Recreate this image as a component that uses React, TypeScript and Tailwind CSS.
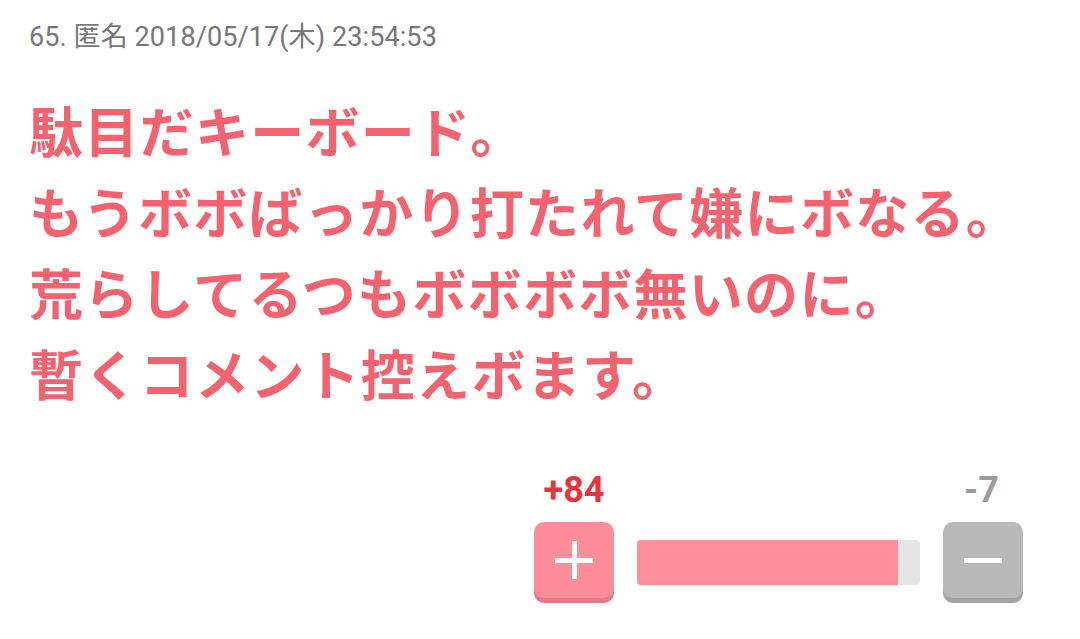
import React from "react";

export default function App() {
  const plus = 84;
  const minus = 7;
  const ratio = plus / (plus + minus);
  return (
    <div className="w-[1080px] h-[639px] bg-white overflow-hidden" style={{ fontFamily: 'Roboto, "Noto Sans CJK JP", sans-serif' }}>
      <div className="pl-[29px] pt-[19px]">
        <div className="text-[27px] leading-[36px] text-[#777777] tracking-[0.1px]" style={{ fontFamily: 'Roboto, "Noto Sans CJK JP", sans-serif' }}>
          65. 匿名 2018/05/17(木) 23:54:53
        </div>
        <div
          className="mt-[34px] text-[54px] leading-[81px] font-semibold text-[#f2636f] tracking-[1.3px]"
          style={{ fontFamily: '"Noto Sans CJK JP", sans-serif' }}
        >
          <div>駄目だキーボード。</div>
          <div>もうボボばっかり打たれて嫌にボなる。</div>
          <div>荒らしてるつもボボボボ無いのに。</div>
          <div>暫くコメント控えボます。</div>
        </div>
      </div>
      <div className="flex justify-end pr-[57px] mt-[57px]">
        <div className="grid grid-cols-[80px_283px_80px] gap-x-[23px]">
          <div className="text-center text-[36px] leading-[40px] font-bold text-[#e8343f]" style={{ fontFamily: 'Roboto, sans-serif' }}>+{plus}</div>
          <div />
          <div className="text-center text-[36px] leading-[40px] font-bold text-[#9b9b9b] pr-[3px]" style={{ fontFamily: 'Roboto, sans-serif' }}>-{minus}</div>

          <div className="mt-[12px] h-[76px] w-[80px] rounded-[10px] bg-[#ff8d99] shadow-[0_5px_0_#e07c88] flex items-center justify-center relative">
            <div className="absolute w-[38px] h-[5px] bg-white" />
            <div className="absolute w-[5px] h-[38px] bg-white" />
          </div>
          <div className="mt-[30px] h-[45px] rounded-[4px] bg-[#e6e6e6] overflow-hidden flex">
            <div className="h-full bg-[#ff8f9b]" style={{ width: `${ratio * 100}%` }} />
          </div>
          <div className="mt-[12px] h-[76px] w-[80px] rounded-[10px] bg-[#b9b9b9] shadow-[0_5px_0_#a3a3a3] flex items-center justify-center">
            <div className="w-[38px] h-[5px] bg-white" />
          </div>
        </div>
      </div>
    </div>
  );
}
